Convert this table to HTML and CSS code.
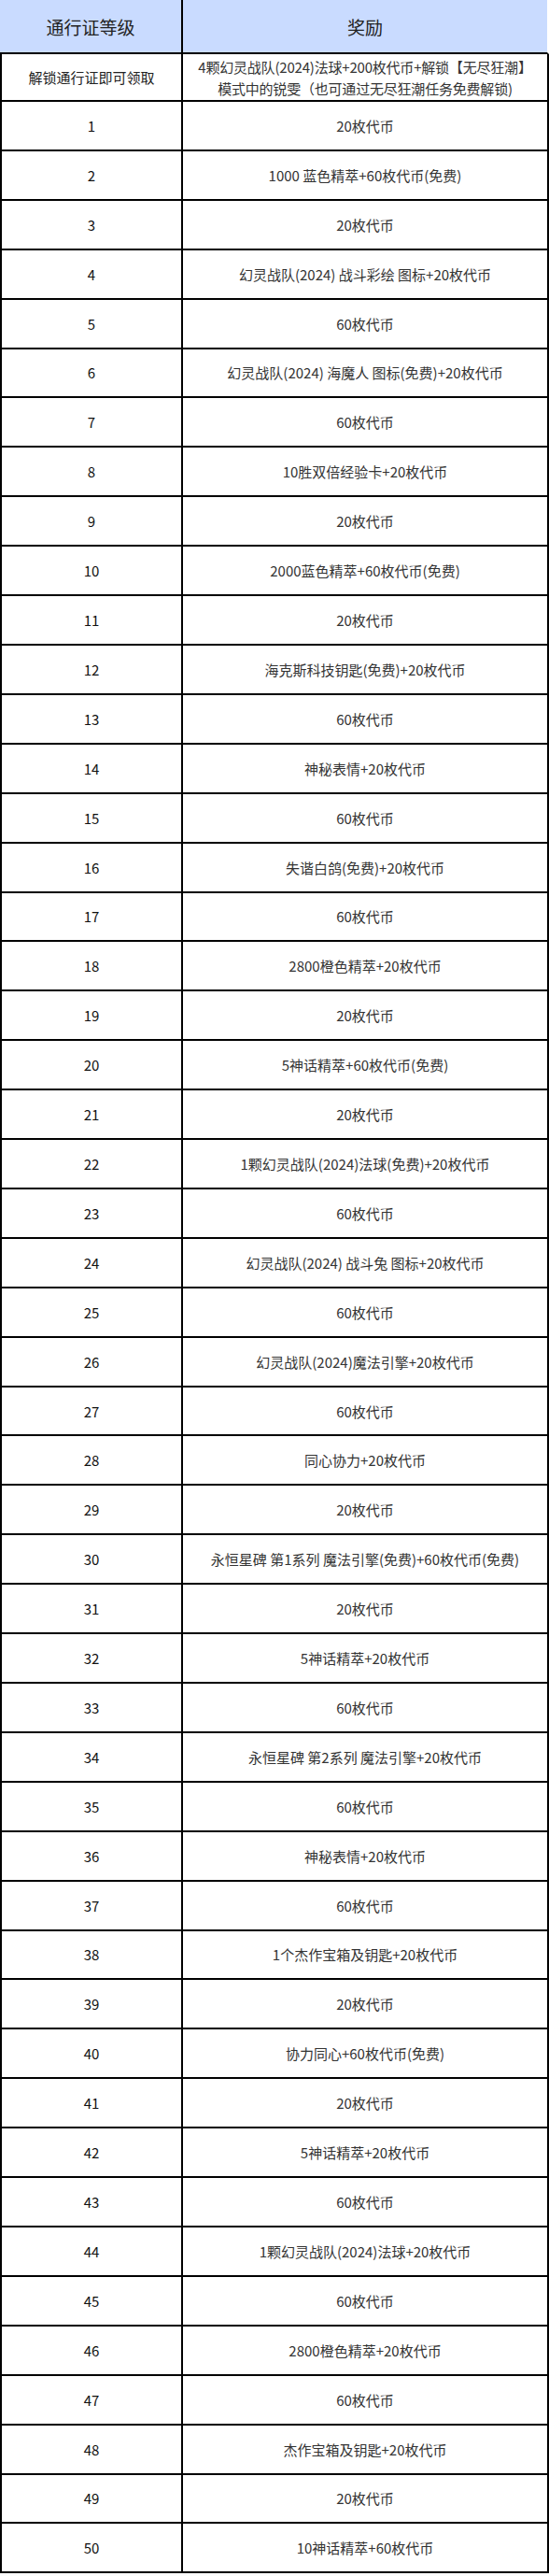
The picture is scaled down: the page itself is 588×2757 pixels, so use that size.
FILE: index.html
```html
<!DOCTYPE html>
<html lang="zh-CN">
<head>
<meta charset="utf-8">
<title>通行证奖励</title>
<link rel="stylesheet" href="styles.css">
</head>
<body>
<table class="pass">
  <colgroup><col class="c-level"><col class="c-reward"></colgroup>
  <thead>
    <tr><th class="h-level">通行证等级</th><th class="h-reward">奖励</th></tr>
  </thead>
  <tbody>
    <tr class="unlock"><td>解锁通行证即可领取</td><td class="two">4颗幻灵战队(2024)法球+200枚代币+解锁【无尽狂潮】<br>模式中的锐雯（也可通过无尽狂潮任务免费解锁)</td></tr>
    <tr><td>1</td><td>20枚代币</td></tr>
    <tr><td>2</td><td>1000 蓝色精萃+60枚代币(免费)</td></tr>
    <tr><td>3</td><td>20枚代币</td></tr>
    <tr><td>4</td><td>幻灵战队(2024) 战斗彩绘 图标+20枚代币</td></tr>
    <tr><td>5</td><td>60枚代币</td></tr>
    <tr><td>6</td><td>幻灵战队(2024) 海魔人 图标(免费)+20枚代币</td></tr>
    <tr><td>7</td><td>60枚代币</td></tr>
    <tr><td>8</td><td>10胜双倍经验卡+20枚代币</td></tr>
    <tr><td>9</td><td>20枚代币</td></tr>
    <tr><td>10</td><td>2000蓝色精萃+60枚代币(免费)</td></tr>
    <tr><td>11</td><td>20枚代币</td></tr>
    <tr><td>12</td><td>海克斯科技钥匙(免费)+20枚代币</td></tr>
    <tr><td>13</td><td>60枚代币</td></tr>
    <tr><td>14</td><td>神秘表情+20枚代币</td></tr>
    <tr><td>15</td><td>60枚代币</td></tr>
    <tr><td>16</td><td>失谐白鸽(免费)+20枚代币</td></tr>
    <tr><td>17</td><td>60枚代币</td></tr>
    <tr><td>18</td><td>2800橙色精萃+20枚代币</td></tr>
    <tr><td>19</td><td>20枚代币</td></tr>
    <tr><td>20</td><td>5神话精萃+60枚代币(免费)</td></tr>
    <tr><td>21</td><td>20枚代币</td></tr>
    <tr><td>22</td><td>1颗幻灵战队(2024)法球(免费)+20枚代币</td></tr>
    <tr><td>23</td><td>60枚代币</td></tr>
    <tr><td>24</td><td>幻灵战队(2024) 战斗兔 图标+20枚代币</td></tr>
    <tr><td>25</td><td>60枚代币</td></tr>
    <tr><td>26</td><td>幻灵战队(2024)魔法引擎+20枚代币</td></tr>
    <tr><td>27</td><td>60枚代币</td></tr>
    <tr><td>28</td><td>同心协力+20枚代币</td></tr>
    <tr><td>29</td><td>20枚代币</td></tr>
    <tr><td>30</td><td>永恒星碑 第1系列 魔法引擎(免费)+60枚代币(免费)</td></tr>
    <tr><td>31</td><td>20枚代币</td></tr>
    <tr><td>32</td><td>5神话精萃+20枚代币</td></tr>
    <tr><td>33</td><td>60枚代币</td></tr>
    <tr><td>34</td><td>永恒星碑 第2系列 魔法引擎+20枚代币</td></tr>
    <tr><td>35</td><td>60枚代币</td></tr>
    <tr><td>36</td><td>神秘表情+20枚代币</td></tr>
    <tr><td>37</td><td>60枚代币</td></tr>
    <tr><td>38</td><td>1个杰作宝箱及钥匙+20枚代币</td></tr>
    <tr><td>39</td><td>20枚代币</td></tr>
    <tr><td>40</td><td>协力同心+60枚代币(免费)</td></tr>
    <tr><td>41</td><td>20枚代币</td></tr>
    <tr><td>42</td><td>5神话精萃+20枚代币</td></tr>
    <tr><td>43</td><td>60枚代币</td></tr>
    <tr><td>44</td><td>1颗幻灵战队(2024)法球+20枚代币</td></tr>
    <tr><td>45</td><td>60枚代币</td></tr>
    <tr><td>46</td><td>2800橙色精萃+20枚代币</td></tr>
    <tr><td>47</td><td>60枚代币</td></tr>
    <tr><td>48</td><td>杰作宝箱及钥匙+20枚代币</td></tr>
    <tr><td>49</td><td>20枚代币</td></tr>
    <tr><td>50</td><td>10神话精萃+60枚代币</td></tr>
  </tbody>
</table>
</body>
</html>
```
FILE: styles.css
```css
html, body {
  margin: 0;
  padding: 0;
  background: #fff;
}

body {
  font-family: "Noto Sans CJK SC", "Noto Sans", sans-serif;
  font-size: 15px;
  color: #333;
}

.pass {
  width: 588px;
  border-collapse: separate;
  border-spacing: 0;
  table-layout: fixed;
}

.c-level { width: 196px; }
.c-reward { width: 392px; }

.pass th {
  background: #c9dbff;
  height: 56px;
  padding: 0;
  font-weight: normal;
  font-size: 19px;
  color: #222;
  text-align: center;
  vertical-align: middle;
  border-bottom: 2px solid #000;
}

.pass th.h-level { border-right: 2px solid #000; }
.pass th.h-reward { border-right: 2px solid #fff; }

.pass td {
  height: 50.92px;
  padding: 0 4px;
  text-align: center;
  vertical-align: middle;
  line-height: 23px;
  border-bottom: 2px solid #000;
  border-right: 2px solid #000;
  white-space: nowrap;
}

.pass td:first-child {
  border-left: 2px solid #000;
  color: #111;
}

.pass tr.unlock td { height: 49px; }
.pass tr.unlock td:first-child { color: #222; }

.pass td.two {
  padding: 0;
  letter-spacing: -0.2px;
}
```
